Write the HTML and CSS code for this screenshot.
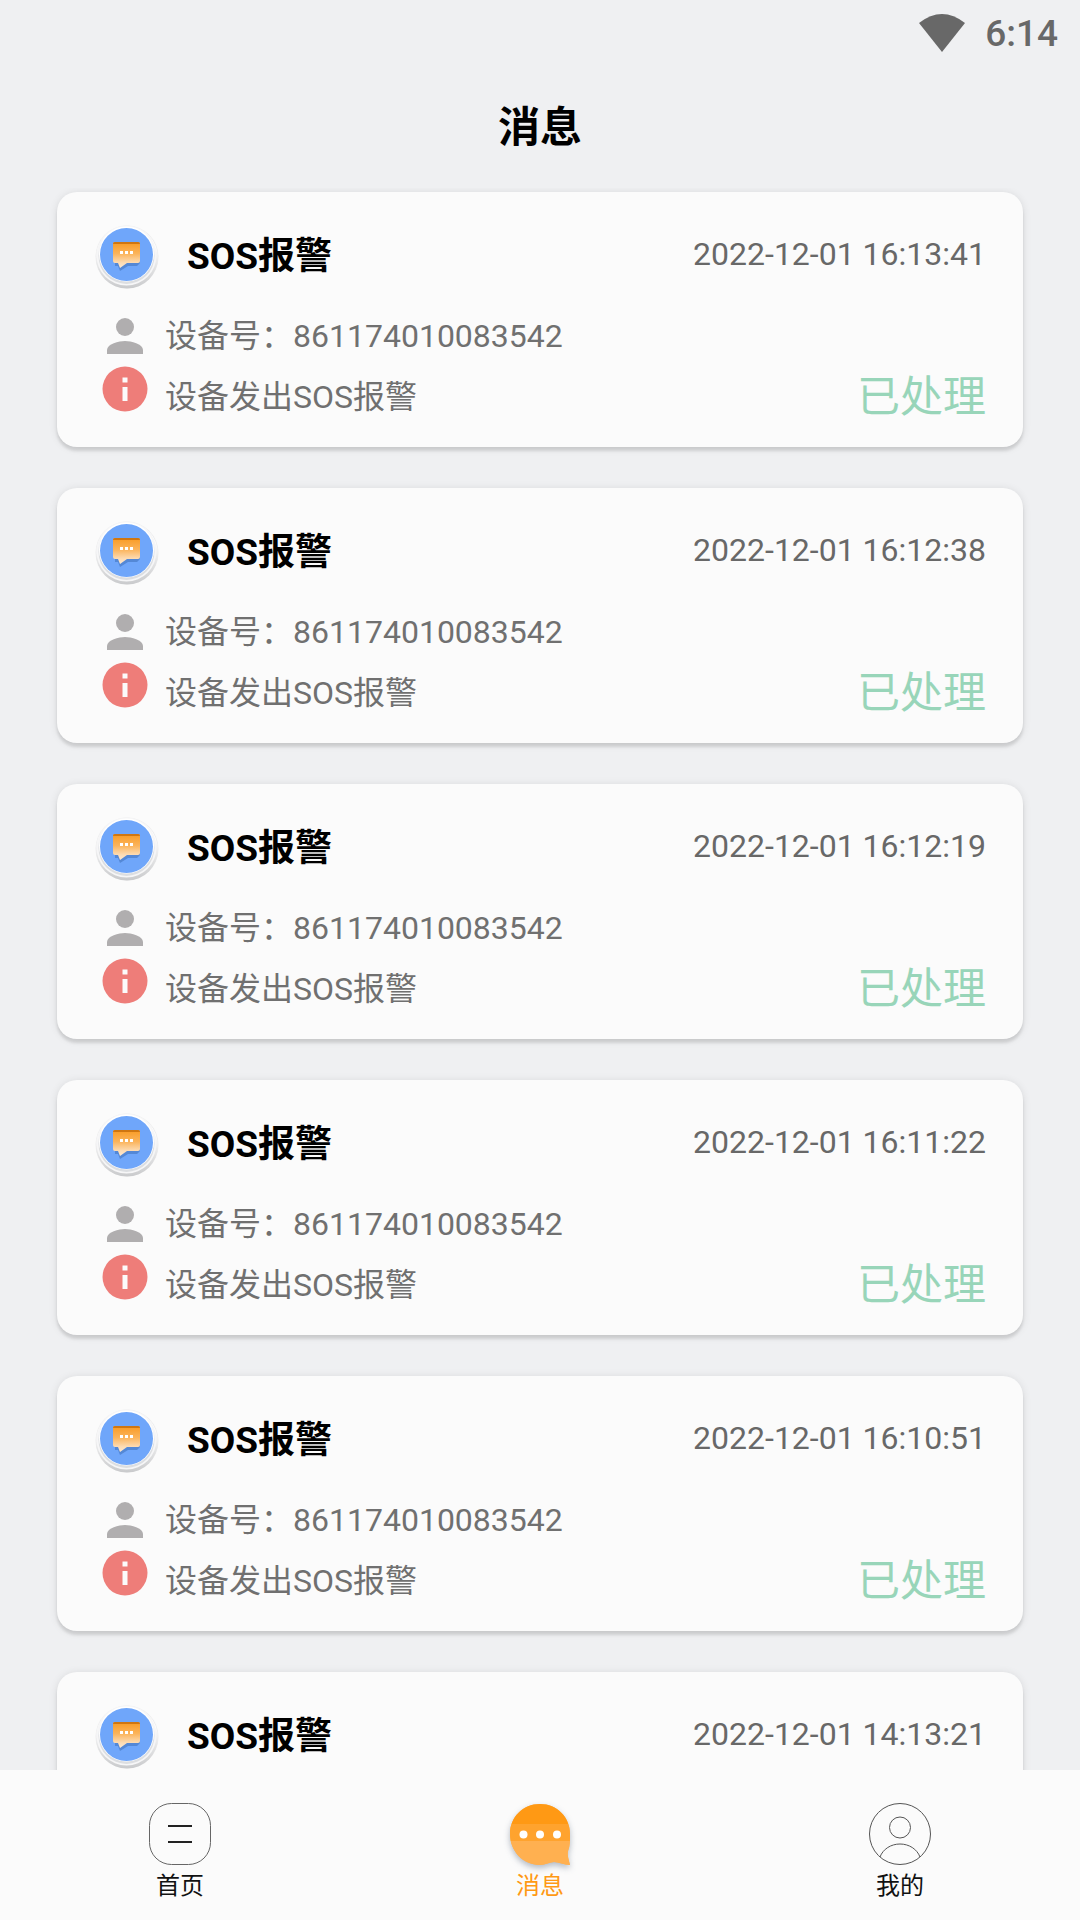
FILE: index.html
```html
<!DOCTYPE html>
<html lang="zh-CN">
<head>
<meta charset="utf-8">
<meta name="viewport" content="width=device-width, initial-scale=1">
<title>消息</title>
<link rel="stylesheet" href="styles.css">
</head>
<body>
<svg class="sprite" aria-hidden="true">
  <defs>
    <linearGradient id="ring" x1="0" y1="0" x2="0" y2="1">
      <stop offset="0.3" stop-color="#fff"/><stop offset="1" stop-color="#c9cacc"/>
    </linearGradient>
    <linearGradient id="bubble" x1="0" y1="0" x2="0" y2="1">
      <stop offset="0" stop-color="#f99a22"/><stop offset="0.45" stop-color="#fbb45c"/><stop offset="0.8" stop-color="#fddcb4"/><stop offset="1" stop-color="#fbe8d2"/>
    </linearGradient>
    <symbol id="badge" viewBox="0 0 64 64">
      <circle cx="32" cy="32" r="31.5" fill="#ececed"/>
      <circle cx="32" cy="32.5" r="31" fill="url(#ring)"/>
      <circle cx="31.5" cy="30.5" r="30" fill="#f6f6f7"/>
      <circle cx="31.5" cy="31" r="28" fill="#dcdee1"/>
      <circle cx="31.5" cy="29" r="27.5" fill="#fff"/>
      <circle cx="31.5" cy="29.5" r="26.5" fill="#6fa6fa"/>
      <path d="M20 37v4h3l2 5 8-5h9l3-3v-3z" fill="#5488d6"/>
      <path d="M20 17h23q2 0 2 2v17q0 2-2 2H32l-7 5-2-5h-3q-2 0-2-2V19q0-2 2-2z" fill="url(#bubble)"/>
      <path d="M20 17h23q2 0 2 2H18q0-2 2-2z" fill="#cf7611"/>
      <path d="M25 26h3v3h-3zM30 26h3v3h-3zM35 26h3v3h-3z" fill="#fff"/>
    </symbol>
    <symbol id="person" viewBox="0 0 36 36">
      <circle cx="18" cy="9" r="9"/>
      <path d="M0 36v-4c0-6 12-9 18-9s18 3 18 9v4z"/>
    </symbol>
    <symbol id="info" viewBox="0 0 46 46">
      <circle cx="23" cy="23" r="22.5" fill="#ee7d79"/>
      <path d="M20.5 11.5h5v5h-5zM20.5 21h5v14h-5z" fill="#fbfbfb"/>
    </symbol>
  </defs>
</svg>
<div class="app">
  <div class="status-bar">
    <svg class="wifi" viewBox="0 0 46 38" aria-hidden="true"><path d="M0 9Q23-9 46 9L23 38z" fill="#686868"/></svg>
    <time>6:14</time>
  </div>
  <header class="header"><h1>消息</h1></header>
  <main class="messages">
    <article class="card">
      <div class="card-head"><svg class="badge"><use href="#badge"/></svg><h2>SOS报警</h2><time>2022-12-01 16:13:41</time></div>
      <div class="row"><svg class="person"><use href="#person"/></svg><p>设备号：861174010083542</p></div>
      <div class="row"><svg class="info"><use href="#info"/></svg><p>设备发出SOS报警</p><strong>已处理</strong></div>
    </article>
    <article class="card">
      <div class="card-head"><svg class="badge"><use href="#badge"/></svg><h2>SOS报警</h2><time>2022-12-01 16:12:38</time></div>
      <div class="row"><svg class="person"><use href="#person"/></svg><p>设备号：861174010083542</p></div>
      <div class="row"><svg class="info"><use href="#info"/></svg><p>设备发出SOS报警</p><strong>已处理</strong></div>
    </article>
    <article class="card">
      <div class="card-head"><svg class="badge"><use href="#badge"/></svg><h2>SOS报警</h2><time>2022-12-01 16:12:19</time></div>
      <div class="row"><svg class="person"><use href="#person"/></svg><p>设备号：861174010083542</p></div>
      <div class="row"><svg class="info"><use href="#info"/></svg><p>设备发出SOS报警</p><strong>已处理</strong></div>
    </article>
    <article class="card">
      <div class="card-head"><svg class="badge"><use href="#badge"/></svg><h2>SOS报警</h2><time>2022-12-01 16:11:22</time></div>
      <div class="row"><svg class="person"><use href="#person"/></svg><p>设备号：861174010083542</p></div>
      <div class="row"><svg class="info"><use href="#info"/></svg><p>设备发出SOS报警</p><strong>已处理</strong></div>
    </article>
    <article class="card">
      <div class="card-head"><svg class="badge"><use href="#badge"/></svg><h2>SOS报警</h2><time>2022-12-01 16:10:51</time></div>
      <div class="row"><svg class="person"><use href="#person"/></svg><p>设备号：861174010083542</p></div>
      <div class="row"><svg class="info"><use href="#info"/></svg><p>设备发出SOS报警</p><strong>已处理</strong></div>
    </article>
    <article class="card">
      <div class="card-head"><svg class="badge"><use href="#badge"/></svg><h2>SOS报警</h2><time>2022-12-01 14:13:21</time></div>
    </article>
  </main>
  <nav class="tabs">
    <a href="#home">
      <svg viewBox="0 0 72 72" fill="none" stroke="#222" aria-hidden="true">
        <rect x="5.5" y="5.5" width="61" height="61" rx="22" stroke="#666"/>
        <path d="M24 28h24M24 44h24" stroke-width="2"/>
      </svg>
      <span>首页</span>
    </a>
    <a href="#messages" class="active" aria-current="page">
      <svg viewBox="0 0 72 72" aria-hidden="true">
        <defs><clipPath id="chat"><path d="M36 6C19 6 6 19 6 36s13 31 30 31c5 0 10-3 14-3 5 0 10 3 16 3-1-5-3-9-2-14 2-5 2-10 2-17C66 19 53 6 36 6z"/></clipPath></defs>
        <path class="chat-shadow" d="M36 6C19 6 6 19 6 36s13 31 30 31c5 0 10-3 14-3 5 0 10 3 16 3-1-5-3-9-2-14 2-5 2-10 2-17C66 19 53 6 36 6z" fill="#ffb04f"/>
        <g clip-path="url(#chat)">
          <path d="M0 0h72v26H0z" fill="#ff9914"/>
          <path d="M0 26h72v17H0z" fill="#ffa32e"/>
          <path d="M0 43h72v29H0z" fill="#ffb050"/>
        </g>
        <g fill="#fff"><circle cx="19.5" cy="36.5" r="4"/><circle cx="36" cy="36.5" r="4"/><circle cx="53" cy="36.5" r="4"/></g>
      </svg>
      <span>消息</span>
    </a>
    <a href="#mine">
      <svg viewBox="0 0 72 72" fill="none" stroke="#555" aria-hidden="true">
        <circle cx="36" cy="36" r="30.5"/>
        <circle cx="36" cy="29.5" r="10.5"/>
        <path d="M16 59C19 51 27 46 36 46s17 5 20 13"/>
      </svg>
      <span>我的</span>
    </a>
  </nav>
</div>
</body>
</html>
```
FILE: styles.css
```css
* {
  box-sizing: border-box;
}

body {
  margin: 0;
  background: #eff0f2;
  color: #000;
  font-family: Roboto, "Noto Sans CJK SC", sans-serif;
}

h1,
h2,
p {
  margin: 0;
}

.sprite {
  position: absolute;
  width: 0;
  height: 0;
}

.app {
  display: flex;
  flex-direction: column;
  height: 100vh;
}

.status-bar {
  display: flex;
  align-items: center;
  justify-content: flex-end;
  gap: 20px;
  height: 64px;
  padding: 2px 22px 0 0;
  color: #686868;
  font-size: 37px;
  font-weight: 500;
}

.wifi {
  width: 46px;
  height: 38px;
}

.header {
  display: grid;
  place-items: center;
  height: 124px;
  padding-top: 4px;
}

.header h1 {
  font-size: 42px;
  font-weight: 700;
  line-height: 60px;
}

.messages {
  display: flex;
  flex: 1;
  flex-direction: column;
  gap: 41px;
  min-height: 0;
  padding: 4px 57px 0;
  overflow-y: auto;
  scrollbar-width: none;
}

.card {
  display: flex;
  flex: none;
  flex-direction: column;
  padding: 33px 37px 20px 38px;
  border-radius: 20px;
  background: #fbfbfb;
  box-shadow: 0 4px 3px rgba(0, 0, 0, 0.1), 0 1px 8px rgba(0, 0, 0, 0.1);
}

.card-head {
  display: flex;
  align-items: center;
  height: 80px;
  padding-bottom: 16px;
}

.card-head h2 {
  margin-left: 28px;
  font-size: 37px;
  font-weight: 700;
  line-height: 48px;
}

.card-head time {
  margin-left: auto;
  padding-bottom: 6px;
  color: #686868;
  font-size: 32px;
}

.badge {
  width: 64px;
  height: 64px;
}

.row {
  display: grid;
  grid-template-columns: 60px 1fr auto;
  gap: 10px;
  align-items: center;
  height: 61px;
  color: #707070;
  font-size: 32px;
  line-height: 48px;
}

.row svg {
  justify-self: center;
}

.row strong {
  color: #98d5b9;
  font-size: 43px;
  font-weight: 400;
}

.person {
  width: 36px;
  height: 36px;
  fill: #b0aeaf;
}

.info {
  width: 46px;
  height: 46px;
}

.row .info {
  align-self: start;
}

.tabs {
  display: grid;
  flex: none;
  grid-template-columns: repeat(3, 1fr);
  height: 150px;
  padding-top: 28px;
  background: #fbfbfb;
}

.tabs a {
  display: flex;
  flex-direction: column;
  align-items: center;
  color: #111;
  font-size: 24px;
  line-height: 32px;
  text-decoration: none;
}

.tabs .active {
  color: #ff9914;
}

.tabs svg {
  width: 72px;
  height: 72px;
  overflow: visible;
}

.chat-shadow {
  filter: drop-shadow(0 3px 3px rgba(40, 60, 90, 0.35));
}
```
